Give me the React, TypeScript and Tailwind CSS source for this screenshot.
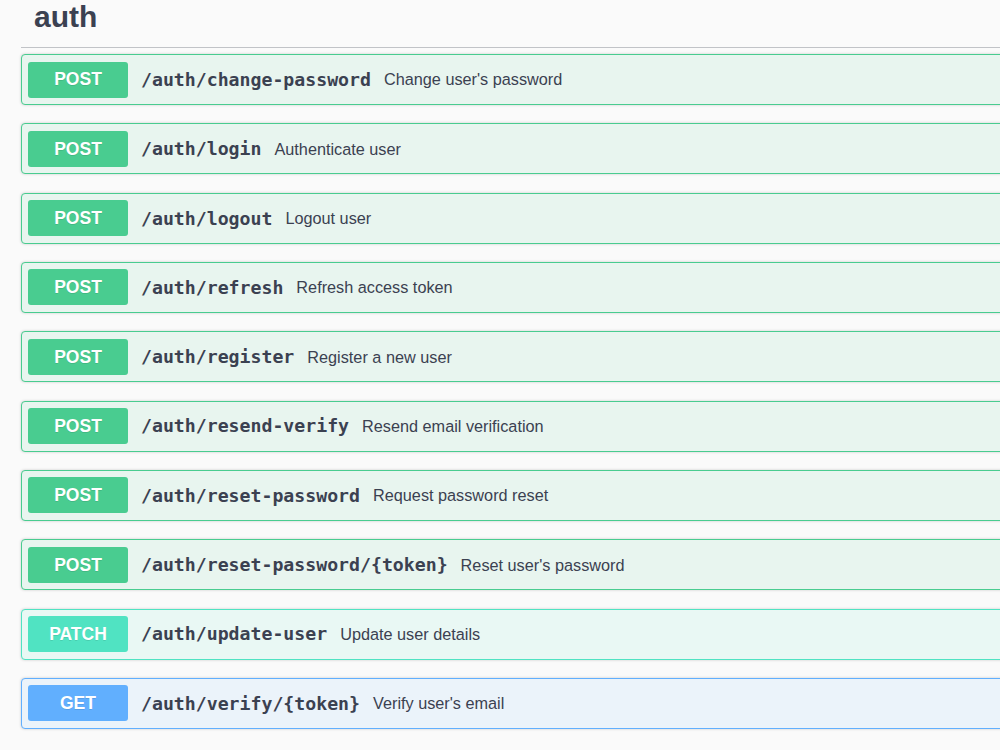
const endpoints = [
  { method: 'POST', path: '/auth/change-password', summary: "Change user's password" },
  { method: 'POST', path: '/auth/login', summary: 'Authenticate user' },
  { method: 'POST', path: '/auth/logout', summary: 'Logout user' },
  { method: 'POST', path: '/auth/refresh', summary: 'Refresh access token' },
  { method: 'POST', path: '/auth/register', summary: 'Register a new user' },
  { method: 'POST', path: '/auth/resend-verify', summary: 'Resend email verification' },
  { method: 'POST', path: '/auth/reset-password', summary: 'Request password reset' },
  { method: 'POST', path: '/auth/reset-password/{token}', summary: "Reset user's password" },
  { method: 'PATCH', path: '/auth/update-user', summary: 'Update user details' },
  { method: 'GET', path: '/auth/verify/{token}', summary: "Verify user's email" },
];

const methodStyles: Record<string, { block: string; badge: string }> = {
  POST: { block: 'border-[#49cc90] bg-[#e8f5ef]', badge: 'bg-[#49cc90]' },
  PATCH: { block: 'border-[#50e3c2] bg-[#e9f8f4]', badge: 'bg-[#50e3c2]' },
  GET: { block: 'border-[#61affe] bg-[#ebf3fa]', badge: 'bg-[#61affe]' },
};

const sans = "font-['Liberation_Sans',Arial,sans-serif]";

export default function App() {
  return (
    <div className={`h-[750px] w-full overflow-hidden bg-[#fafafa] ${sans}`}>
      <div className="ml-[21px] w-[1200px]">
        <h3 className="border-b border-[#c1c3c7] pb-[13px] pl-[13px] text-[30px] leading-[34px] font-bold text-[#3b4151]">
          auth
        </h3>
        <div className="mt-[6px]">
          {endpoints.map((endpoint) => {
            const style = methodStyles[endpoint.method];
            return (
              <div
                key={endpoint.path}
                className={`mb-[18.33px] flex h-[51px] items-center rounded-[4px] border px-[6px] shadow-[0_0_3px_rgba(0,0,0,0.19)] ${style.block}`}
              >
                <span
                  className={`flex h-[36px] w-[100px] shrink-0 items-center justify-center rounded-[3px] text-[17.5px] font-bold text-white [text-shadow:0_1px_0_rgba(0,0,0,0.1)] ${style.badge}`}
                >
                  {endpoint.method}
                </span>
                <span className="pl-[13px] font-['DejaVu_Sans_Mono',monospace] text-[18.2px] font-bold text-[#3b4151]">
                  {endpoint.path}
                </span>
                <span className="pl-[13px] text-[16.25px] text-[#3b4151]">
                  {endpoint.summary}
                </span>
              </div>
            );
          })}
        </div>
      </div>
    </div>
  );
}
